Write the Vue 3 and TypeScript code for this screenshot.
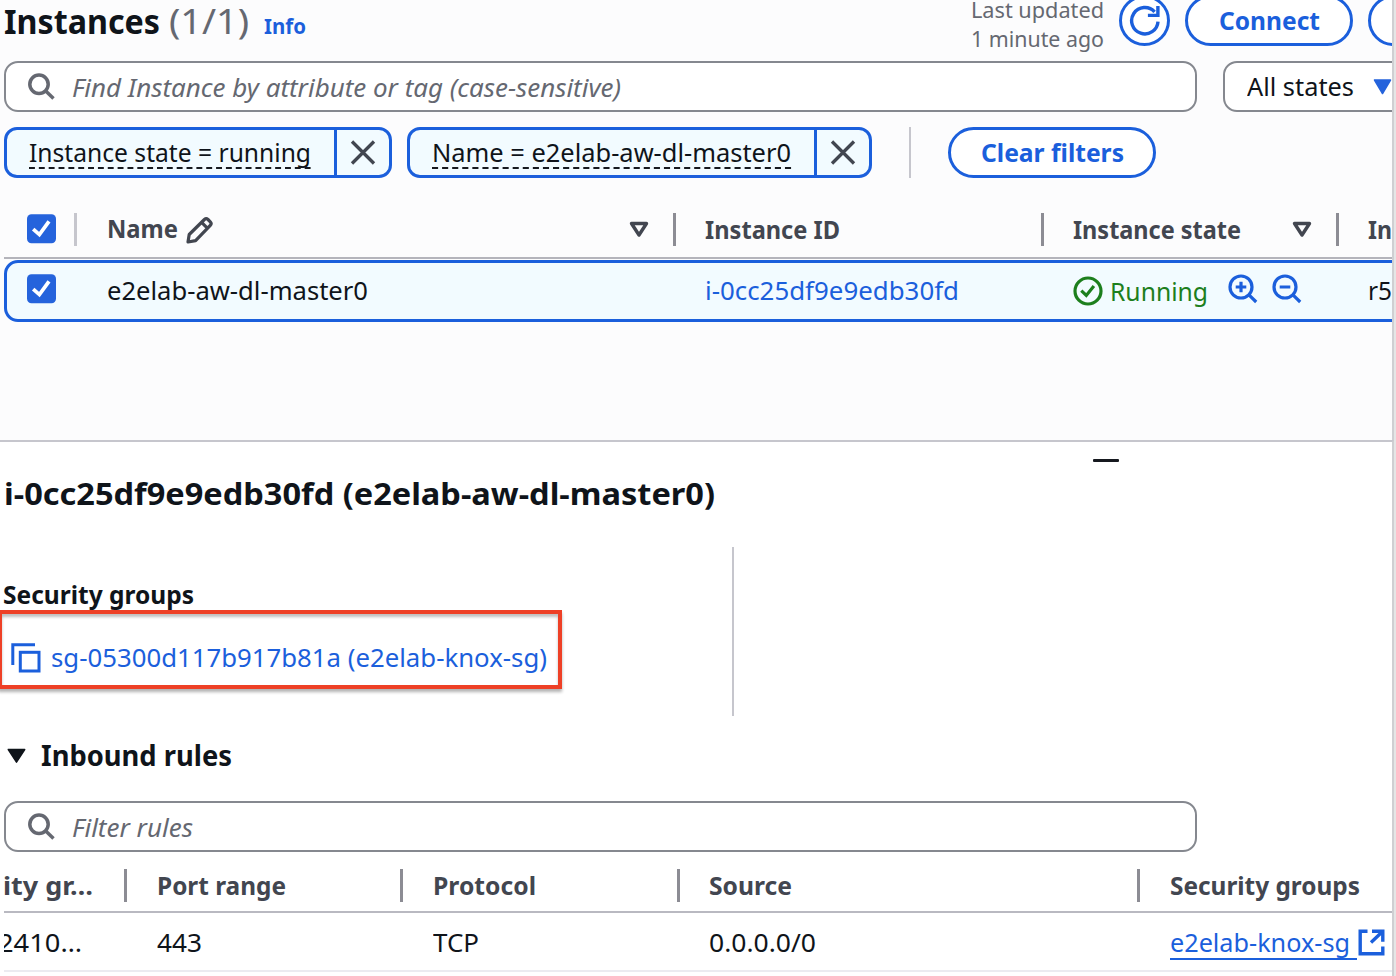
<script setup lang="ts">
import type { Directive } from 'vue'

// Condenses a label horizontally so that it occupies the given width.
const vFit: Directive<HTMLElement, number> = {
  mounted(el, { value }) {
    const natural = el.getBoundingClientRect().width
    el.style.transform = `scaleX(${value / natural})`
    el.style.marginRight = `${value - natural}px`
  },
}

interface Token { label: string; width: number }
const tokens: Token[] = [
  { label: 'Instance state = running', width: 282 },
  { label: 'Name = e2elab-aw-dl-master0', width: 359 },
]
</script>

<template>
  <div class="page">
    <section class="top">
      <header class="head">
        <h1 class="title"><span v-fit="156" class="t">Instances</span></h1>
        <span class="count"><span v-fit="80" class="t">(1/1)</span></span>
        <a class="info"><span v-fit="42" class="t">Info</span></a>
        <div class="updated">
          <span v-fit="133" class="t">Last updated</span>
          <span v-fit="133" class="t">1 minute ago</span>
        </div>
        <button class="btn refresh">
          <svg width="32" height="32" viewBox="0 0 32 32" fill="none" stroke="#1b5fdc" stroke-width="3.4">
            <path d="M29 16.6A13.2 13.2 0 1 1 25.6 6.8" />
            <path d="M28.9 1v9.4h-10" />
          </svg>
        </button>
        <button class="btn connect"><span v-fit="101" class="t">Connect</span></button>
        <button class="btn more"></button>
      </header>

      <div class="search-row">
        <div class="search">
          <svg class="lens" width="28" height="28" viewBox="0 0 28 28" fill="none" stroke="#656871" stroke-width="3.5">
            <circle cx="11" cy="11.3" r="9.2" /><path d="M17.5 17.8l8 7.7" />
          </svg>
          <span v-fit="549" class="t ph">Find Instance by attribute or tag (case-sensitive)</span>
        </div>
        <div class="select">
          <span v-fit="107" class="t up">All states</span>
          <svg width="19" height="16" viewBox="0 0 19 16"><path d="M1.5 1h16L9.5 14.5z" fill="#2563dc" stroke="#2563dc" stroke-width="1.5" stroke-linejoin="round" /></svg>
        </div>
      </div>

      <div class="tokens">
        <div v-for="token in tokens" :key="token.label" class="token">
          <div class="token-label"><span v-fit="token.width" class="t">{{ token.label }}</span></div>
          <div class="token-x">
            <svg width="26" height="26" viewBox="0 0 26 26" fill="none" stroke="#424650" stroke-width="3.3"><path d="M2 1.5l22 22M24 1.5L2 23.5" /></svg>
          </div>
        </div>
        <i class="rule"></i>
        <button class="btn clear"><span v-fit="143" class="t">Clear filters</span></button>
      </div>

      <div class="grid ghead">
        <div class="cell check">
          <svg width="30" height="30" viewBox="0 0 30 30"><rect x="0" y=".3" width="29" height="29" rx="4.5" fill="#2563dc" /><path d="M6.2 15.2l6.2 5.4L22 7.3" fill="none" stroke="#fff" stroke-width="3.7" /></svg>
          <i class="sep light"></i>
        </div>
        <div class="cell name">
          <span v-fit="71" class="t">Name</span>
          <svg class="pencil" width="28" height="28" viewBox="0 0 28 28" fill="none" stroke="#424650" stroke-width="3.2" stroke-linejoin="round"><path d="M2 26l1.2-7.5L18.4 3.5q1.8-1.6 3.6 0l2.3 2.3q1.7 1.8 0 3.6L9.6 24.6zM15.6 6.3l6 6" /></svg>
          <svg class="tri" width="20" height="17" viewBox="0 0 20 17"><path d="M2.5 2.5h15L10 14z" fill="none" stroke="#424650" stroke-width="3.4" stroke-linejoin="round" /></svg>
          <i class="sep"></i>
        </div>
        <div class="cell low"><span v-fit="135" class="t">Instance ID</span><i class="sep"></i></div>
        <div class="cell low">
          <span v-fit="168" class="t">Instance state</span>
          <svg class="tri" width="20" height="17" viewBox="0 0 20 17"><path d="M2.5 2.5h15L10 14z" fill="none" stroke="#424650" stroke-width="3.4" stroke-linejoin="round" /></svg>
          <i class="sep"></i>
        </div>
        <div class="cell low"><span v-fit="24" class="t">In</span></div>
      </div>

      <div class="grid grow">
        <div class="cell check">
          <svg width="30" height="30" viewBox="0 0 30 30"><rect x="0" y=".3" width="29" height="29" rx="4.5" fill="#2563dc" /><path d="M6.2 15.2l6.2 5.4L22 7.3" fill="none" stroke="#fff" stroke-width="3.7" /></svg>
        </div>
        <div class="cell name"><span v-fit="261" class="t">e2elab-aw-dl-master0</span></div>
        <div class="cell"><a v-fit="254" class="t link">i-0cc25df9e9edb30fd</a></div>
        <div class="cell state">
          <svg width="30" height="30" viewBox="0 0 30 30" fill="none" stroke="#1d7f1d" stroke-width="3.2"><circle cx="15" cy="15" r="13" /><path d="M8.3 14.6l5 4.8 7.6-9.4" /></svg>
          <span v-fit="98" class="t run">Running</span>
          <svg class="zoom" width="30" height="30" viewBox="0 0 30 30" fill="none" stroke="#1b5fdc" stroke-width="3.2"><circle cx="13" cy="13" r="11" /><path d="M20.7 20.7l7.5 7.3M13 7.7v10.6M7.7 13h10.6" /></svg>
          <svg class="zoom" width="30" height="30" viewBox="0 0 30 30" fill="none" stroke="#1b5fdc" stroke-width="3.2"><circle cx="13" cy="13" r="11" /><path d="M20.7 20.7l7.5 7.3M7.7 13h10.6" /></svg>
        </div>
        <div class="cell"><span v-fit="24" class="t">r5</span></div>
      </div>
    </section>

    <section class="bottom">
      <div class="handle"></div>
      <h2 class="detail"><span v-fit="711" class="t">i-0cc25df9e9edb30fd (e2elab-aw-dl-master0)</span></h2>
      <div class="groups">
        <h3 class="label"><span v-fit="191" class="t">Security groups</span></h3>
        <div class="marked">
          <svg width="30" height="30" viewBox="0 0 30 30" fill="none" stroke="#1b5fdc" stroke-width="3"><path d="M24 1.8H1.8V22" /><rect x="9.3" y="9.3" width="18.7" height="18.7" /></svg>
          <a v-fit="496" class="t link">sg-05300d117b917b81a (e2elab-knox-sg)</a>
        </div>
      </div>
      <h3 class="inbound">
        <svg width="20" height="16" viewBox="0 0 20 16"><path d="M2.3 1.5h16.4L10.5 14.2z" fill="#0f141a" stroke="#0f141a" stroke-width="1.5" stroke-linejoin="round" /></svg>
        <span v-fit="191" class="t up">Inbound rules</span>
      </h3>
      <div class="search rules">
        <svg class="lens" width="28" height="28" viewBox="0 0 28 28" fill="none" stroke="#656871" stroke-width="3.5">
          <circle cx="11" cy="11.3" r="9.2" /><path d="M17.5 17.8l8 7.7" />
        </svg>
        <span v-fit="121" class="t ph">Filter rules</span>
      </div>
      <div class="rgrid rhead">
        <div class="cell first"><span v-fit="90" class="t">ity gr…</span><i class="sep"></i></div>
        <div class="cell"><span v-fit="129" class="t">Port range</span><i class="sep"></i></div>
        <div class="cell"><span v-fit="103" class="t">Protocol</span><i class="sep"></i></div>
        <div class="cell"><span v-fit="83" class="t">Source</span><i class="sep"></i></div>
        <div class="cell"><span v-fit="190" class="t">Security groups</span></div>
      </div>
      <div class="rgrid rrow">
        <div class="cell first cut"><span v-fit="84" class="t">2410…</span></div>
        <div class="cell"><span v-fit="45" class="t">443</span></div>
        <div class="cell"><span v-fit="46" class="t">TCP</span></div>
        <div class="cell"><span v-fit="107" class="t">0.0.0.0/0</span></div>
        <div class="cell">
          <a class="ext"><span v-fit="180" class="t link">e2elab-knox-sg</span></a>
          <svg width="27" height="27" viewBox="0 0 27 27" fill="none" stroke="#1b5fdc" stroke-width="3.4"><path d="M9.5 2.2H2.2v22.6h22.6v-7.3M14 2.2h10.8v10.6M24 3L13 13.4" /></svg>
        </div>
      </div>
    </section>
  </div>
</template>

<style>
body { background: #fff; overflow: hidden; }
</style>

<style scoped>
* { box-sizing: border-box; }
.page { width: 1396px; height: 976px; overflow: hidden; border-right: 2px solid #e5e6e6; background: #fcfcfd; font: 25px/30px "Noto Sans", "Open Sans", sans-serif; color: #0f141a; display: flex; flex-direction: column; }
.top, .bottom { border-right: 2px solid #cfcfd2; width: 1394px; overflow: hidden; flex: none; }
.top { height: 440px; }
.bottom { height: 536px; background: #fff; border-top: 2px solid #c6c6cd; }
.t { display: inline-block; white-space: nowrap; transform-origin: 0 50%; flex: none; }
.up { margin-top: -2px; }
svg { flex: none; display: block; }
h1, h2, h3 { margin: 0; font-weight: 700; }
.link { color: #1b5fdc; }

.head { display: flex; height: 61px; }
.head > * { flex: none; }
.title { font-size: 34px; line-height: 42px; margin-left: 4px; width: 165px; }
.count { font-size: 34px; line-height: 42px; color: #656871; width: 95px; }
.info { font-size: 22px; font-weight: 700; line-height: 51px; color: #1b5fdc; width: 80px; }
.updated { margin-left: 627px; width: 148px; font-size: 22.3px; line-height: 29px; color: #656871; display: flex; flex-direction: column; align-items: flex-start; margin-top: -5px; }
.btn { font: 700 25px/30px "Noto Sans", sans-serif; color: #1b5fdc; border: 3px solid #1b5fdc; background: #fff; border-radius: 26px; height: 51px; padding: 0 0 2px; display: flex; align-items: center; justify-content: center; flex: none; }
.head .btn { margin-top: -5px; }
.refresh { width: 51px; }
.refresh { padding: 0; }
.connect { width: 168px; margin-left: 15px; }
.more { width: 100px; margin-left: 15px; }

.search-row { display: flex; }
.search { height: 51px; width: 1193px; margin-left: 4px; border: 2px solid #85888f; border-radius: 14px; background: #fff; display: flex; align-items: center; flex: none; }
.lens { margin-left: 22px; }
.ph { font-style: italic; color: #656871; margin-left: 16px; }
.select { margin-left: 26px; width: 200px; height: 51px; border: 2px solid #85888f; border-radius: 14px; background: #fff; display: flex; align-items: center; padding-left: 22px; gap: 19px; flex: none; }

.tokens { display: flex; margin: 15px 0 0 4px; height: 51px; }
.token { display: flex; border: 3px solid #1b5fdc; border-radius: 13px; background: #f2fbff; margin-right: 15px; }
.token-label { padding: 7px 23px 0 22px; border-right: 3px solid #1b5fdc; display: flex; height: 45px; }
.token-label .t { height: 32px; border-bottom: 2px dashed #16191f; }
.token-x { width: 52px; display: flex; align-items: center; justify-content: center; padding-right: 1px; }
.rule { width: 2px; background: #c6c6cd; margin: 0 37px 0 22px; }
.clear { width: 208px; }

.grid { display: grid; grid-template-columns: 72px 600px 368px 295px 1fr; margin-left: 4px; }
.cell { display: flex; align-items: center; min-width: 0; }
.sep { width: 3px; height: 33px; background: #8c8c94; margin-left: auto; flex: none; }
.ghead { height: 80px; padding-top: 23px; align-items: start; border-bottom: 2px solid #b4b4bb; font-weight: 700; color: #424650; margin-top: 1px; padding-bottom: 0; }
.ghead .cell { height: 56px; align-items: start; padding-top: 12px; padding-left: 29px; }
.ghead .t { margin-top: -1px; }
.ghead .low .t { margin-top: 0; }
.ghead .check { padding-left: 23px; }
.ghead .name { padding-left: 31px; }
.ghead .sep { margin-top: -1px; margin-left: 0; }
.ghead .sep.light { margin-left: 17px; background: #c6c6cd; }
.ghead .check .sep { margin-right: -3px; }
.pencil { margin: 2px 0 0 8px; }
.tri { margin: 7px 24px 0 auto; }
.ghead .low:nth-child(3) .sep { margin-left: auto; }
.grow { height: 62px; margin-right: -20px; border: 3px solid #1b5fdc; border-radius: 14px; background: #f2fbff; grid-template-columns: 69px 600px 368px 295px 1fr; margin-top: 1px; }
.grow .cell { height: 53px; padding-left: 29px; }
.grow .name { padding-left: 31px; }
.grow .check { padding: 0 0 2px 20px; }
.grow .state { padding-top: 3px; }
.run { color: #1d7f1d; margin-left: 7px; }
.zoom { margin: -5px 0 0 20px; }
.zoom + .zoom { margin-left: 14px; }

.handle { width: 26px; height: 3px; background: #16191f; margin: 17px 0 0 1093px; border-radius: 1px; }
.detail { font-size: 31px; line-height: 40px; margin: 11px 0 0 4px; height: 40px; }
.groups { margin-top: 34px; height: 169px; width: 734px; border-right: 2px solid #c6c6cd; padding-top: 33px; }
.label { font-size: 24.5px; height: 30px; margin-left: 3px; }
.marked { width: 564px; height: 79px; border: 4px solid #ee4026; margin-left: -2px; box-shadow: 0 3px 3px rgba(0,0,0,.3), inset 0 3px 3px rgba(0,0,0,.25); display: flex; align-items: center; padding: 16px 0 0 9px; gap: 10px; }
.marked .t { margin-top: -2px; }
.inbound { margin: 25px 0 0 6px; height: 30px; font-size: 28px; display: flex; align-items: center; gap: 15px; }
.rules { margin-top: 30px; }
.rgrid { display: grid; grid-template-columns: 123px 276px 277px 460px 1fr; margin-left: 4px; }
.rgrid .cell { padding-left: 30px; }
.rgrid .cell:nth-child(4) { padding-left: 29px; }
.rgrid .cell > .t { margin-top: -2px; }
.rgrid .cell.first { padding-left: 0; }
.rgrid .first > .t { margin-left: -1px; }
.rhead { height: 61px; border-bottom: 2px solid #b9b9c1; font-weight: 700; color: #424650; }
.rhead .cell { height: 67px; }
.rrow { height: 59px; border-bottom: 2px solid #ebebf0; }
.rrow .cell { height: 59px; }
.cut { overflow: hidden; }
.rgrid .cut > .t { margin-left: -6px; }
.ext { border-bottom: 2px solid #1b5fdc; height: 33px; width: 187px; margin-top: 1px; flex: none; }
.ext + svg { margin-left: 1px; }
</style>
